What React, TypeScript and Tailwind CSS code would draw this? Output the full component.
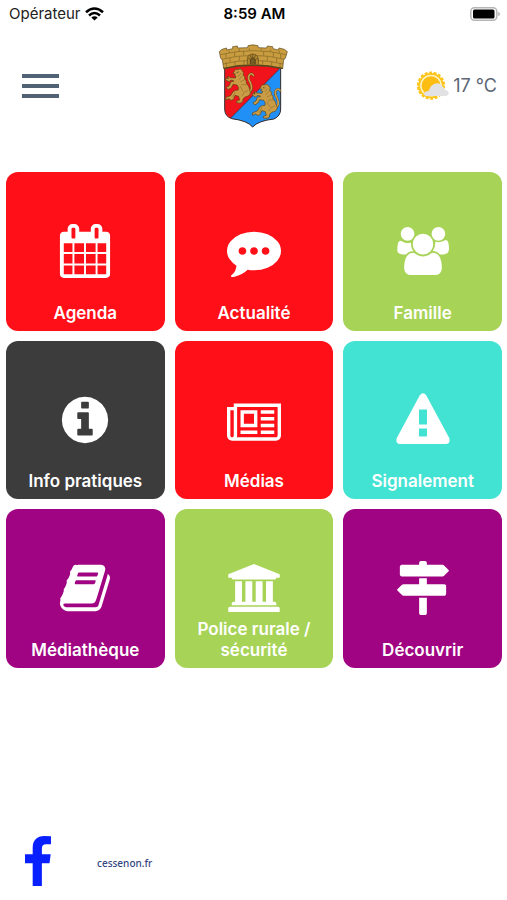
import React from "react";

interface IconProps {
  className?: string;
  viewBox: string;
  d: string;
}

interface Tile {
  label: string;
  color: string;
  viewBox: string;
  icon: string;
}

const RED = "bg-[#ff0f17]";
const GREEN = "bg-[#a7d356]";
const DARK = "bg-[#3c3c3c]";
const TURQUOISE = "bg-[#42e3d2]";
const PURPLE = "bg-[#a00482]";

const tiles: Tile[] = [
  {
    label: "Agenda",
    color: RED,
    viewBox: "0 0 1792 1792",
    icon: "M192 1664h288v-288h-288v288zm352 0h320v-288h-320v288zm-352-352h288v-320h-288v320zm352 0h320v-320h-320v320zm-352-384h288v-288h-288v288zm736 736h320v-288h-320v288zm-384-736h320v-288h-320v288zm768 736h288v-288h-288v288zm-384-352h320v-320h-320v320zm-352-864v-288q0-13-9.5-22.5t-22.5-9.5h-64q-13 0-22.5 9.5t-9.5 22.5v288q0 13 9.5 22.5t22.5 9.5h64q13 0 22.5-9.5t9.5-22.5zm736 864h288v-320h-288v320zm-384-384h320v-288h-320v288zm384 0h288v-288h-288v288zm32-480v-288q0-13-9.5-22.5t-22.5-9.5h-64q-13 0-22.5 9.5t-9.5 22.5v288q0 13 9.5 22.5t22.5 9.5h64q13 0 22.5-9.5t9.5-22.5zm384-64v1280q0 52-38 90t-90 38h-1408q-52 0-90-38t-38-90v-1280q0-52 38-90t90-38h128v-96q0-66 47-113t113-47h64q66 0 113 47t47 113v96h384v-96q0-66 47-113t113-47h64q66 0 113 47t47 113v96h128q52 0 90 38t38 90z",
  },
  {
    label: "Actualité",
    color: RED,
    viewBox: "0 0 1792 1792",
    icon: "M640 896q0-53-37.5-90.5t-90.5-37.5-90.5 37.5-37.5 90.5 37.5 90.5 90.5 37.5 90.5-37.5 37.5-90.5zm384 0q0-53-37.5-90.5t-90.5-37.5-90.5 37.5-37.5 90.5 37.5 90.5 90.5 37.5 90.5-37.5 37.5-90.5zm384 0q0-53-37.5-90.5t-90.5-37.5-90.5 37.5-37.5 90.5 37.5 90.5 90.5 37.5 90.5-37.5 37.5-90.5zm384 0q0 174-120 321.5t-326 233-450 85.5q-110 0-211-18-173 173-435 229-52 10-86 13-12 1-22-6t-13-18q-4-15 20-37 5-5 23.5-21.5t25.5-23.5 23.5-25.5 24-31.5 20.5-37 20-48 14.5-57.5 12.5-72.5q-146-90-229.5-216.5t-83.5-269.5q0-174 120-321.5t326-233 450-85.5 450 85.5 326 233 120 321.5z",
  },
  {
    label: "Famille",
    color: GREEN,
    viewBox: "-48 -112 2016 2016",
    icon: "M593 896q-162 5-265 128h-134q-82 0-138-40.5t-56-118.5q0-353 124-353 6 0 43.5 21t97.5 42.5 119 21.5q67 0 133-23-5 37-5 66 0 159 93 287zm1071 637q0 120-73 189.5t-194 69.5h-874q-121 0-194-69.5t-73-189.5q0-53 3.5-103.5t14-109 26.5-108.5 43-97.5 62-81 85.5-53.5 111.5-20q10 0 43 21.5t73 48 107 48 135 21.5 135-21.5 107-48 73-48 43-21.5q61 0 111.5 20t85.5 53.5 62 81 43 97.5 26.5 108.5 14 109 3.5 103.5zm-1024-1277q0 106-75 181t-181 75-181-75-75-181 75-181 181-75 181 75 75 181zm704 384q0 159-112.5 271.5t-271.5 112.5-271.5-112.5-112.5-271.5 112.5-271.5 271.5-112.5 271.5 112.5 112.5 271.5zm576 225q0 78-56 118.5t-138 40.5h-134q-103-123-265-128 93-128 93-287 0-29-5-66 66 23 133 23 59 0 119-21.5t97.5-42.5 43.5-21q124 0 124 353zm-128-609q0 106-75 181t-181 75-181-75-75-181 75-181 181-75 181 75 75 181z",
  },
  {
    label: "Info pratiques",
    color: DARK,
    viewBox: "0 0 1792 1792",
    icon: "M1152 1376v-160q0-14-9-23t-23-9h-96v-512q0-14-9-23t-23-9h-320q-14 0-23 9t-9 23v160q0 14 9 23t23 9h96v320h-96q-14 0-23 9t-9 23v160q0 14 9 23t23 9h448q14 0 23-9t9-23zm-128-896v-160q0-14-9-23t-23-9h-192q-14 0-23 9t-9 23v160q0 14 9 23t23 9h192q14 0 23-9t9-23zm640 416q0 209-103 385.5t-279.5 279.5-385.5 103-385.5-103-279.5-279.5-103-385.5 103-385.5 279.5-279.5 385.5-103 385.5 103 279.5 279.5 103 385.5z",
  },
  {
    label: "Médias",
    color: RED,
    viewBox: "0 -272 2048 2048",
    icon: "M1024 512h-384v384h384v-384zm128 640v128h-640v-128h640zm0-768v640h-640v-640h640zm640 768v128h-512v-128h512zm0-256v128h-512v-128h512zm0-256v128h-512v-128h512zm0-256v128h-512v-128h512zm-1536 960v-960h-128v960q0 26 19 45t45 19 45-19 19-45zm1664 0v-1088h-1536v1088q0 33-11 64h1483q26 0 45-19t19-45zm128-1216v1216q0 80-56 136t-136 56h-1664q-80 0-136-56t-56-136v-1088h256v-128h1792z",
  },
  {
    label: "Signalement",
    color: TURQUOISE,
    viewBox: "0 0 54 54",
    icon: "M23.8 2.2Q27-1.8 30.2 2.2L53.2 45Q54.8 50.5 50 51H4Q-.8 50.5.8 45ZM23 16.5V31.5H31V16.5ZM23 35.5V43.5H31V35.5Z",
  },
  {
    label: "Médiathèque",
    color: PURPLE,
    viewBox: "0 0 1792 1792",
    icon: "M1703 478q40 57 18 129l-275 906q-19 64-76.5 107.5t-122.5 43.5h-923q-77 0-148.5-53.5t-99.5-131.5q-24-67-2-127 0-4 3-27t4-37q1-8-3-21.5t-3-19.5q2-11 8-21t16.5-23.5 16.5-23.5q23-38 45-91.5t30-91.5q3-10 .5-30t-.5-28q3-11 17-28t17-23q21-36 42-92t25-90q1-9-2.5-32t.5-28q4-13 22-30.5t22-22.5q19-26 42.5-84.5t27.5-96.5q1-8-3-25.5t-2-26.5q2-8 9-18t18-23 17-21q8-12 16.5-30.5t15-35 16-36 19.5-32 26.5-23.5 36-11.5 47.5 5.5l-1 3q38-9 51-9h761q74 0 114 56t18 130l-274 906q-36 119-71.5 153.5t-128.5 34.5h-869q-27 0-38 15-11 16-1 43 24 70 144 70h923q29 0 56-15.5t35-41.5l300-987q7-22 5-57 38 15 59 43zm-1064 2q-4 13 2 22.5t20 9.5h608q13 0 25.5-9.5t16.5-22.5l21-64q4-13-2-22.5t-20-9.5h-608q-13 0-25.5 9.5t-16.5 22.5zm-83 256q-4 13 2 22.5t20 9.5h608q13 0 25.5-9.5t16.5-22.5l21-64q4-13-2-22.5t-20-9.5h-608q-13 0-25.5 9.5t-16.5 22.5z",
  },
  {
    label: "Police rurale / sécurité",
    color: GREEN,
    viewBox: "-48 -112 2016 2016",
    icon: "M960 0l960 384v128h-128q0 26-20.5 45t-48.5 19h-1526q-28 0-48.5-19t-20.5-45h-128v-128zm-704 640h256v768h128v-768h256v768h128v-768h256v768h128v-768h256v768h59q28 0 48.5 19t20.5 45v64h-1664v-64q0-26 20.5-45t48.5-19h59v-768zm1595 960q28 0 48.5 19t20.5 45v128h-1920v-128q0-26 20.5-45t48.5-19h1782z",
  },
  {
    label: "Découvrir",
    color: PURPLE,
    viewBox: "0 0 1792 1792",
    icon: "M1745 297q10 10 10 23t-10 23l-141 141q-28 28-68 28h-1344q-26 0-45-19t-19-45v-256q0-26 19-45t45-19h576v-64q0-26 19-45t45-19h128q26 0 45 19t19 45v64h512q40 0 68 28zm-977 919h256v512q0 26-19 45t-45 19h-128q-26 0-45-19t-19-45v-512zm832-448q26 0 45 19t19 45v256q0 26-19 45t-45 19h-1344q-40 0-68-28l-141-141q-10-10-10-23t10-23l141-141q28-28 68-28h512v-192h256v192h576z",
  },
];

const FACEBOOK =
  "M1343 12v264h-157q-86 0-116 36t-30 108v189h293l-39 296h-254v759h-306v-759h-255v-296h255v-218q0-186 104-288.5t277-102.5q147 0 228 12z";

const Icon: React.FC<IconProps> = ({ className, viewBox, d }) => (
  <svg className={className} viewBox={viewBox} fill="currentColor" aria-hidden="true">
    <path d={d} />
  </svg>
);

const WifiIcon = () => (
  <svg className="h-[14px] w-[19px]" viewBox="0 0 19 14" aria-hidden="true">
    <g fill="none" stroke="#000" strokeWidth="2.6">
      <path d="M1 5.2Q9.5-2.2 18 5.2" />
      <path d="M4 8.4Q9.5 3.6 15 8.4" />
    </g>
    <path d="M9.5 13.6L6.3 10.6Q9.5 8 12.7 10.6Z" />
  </svg>
);

const BatteryIcon = () => (
  <svg className="h-[14px] w-[30px]" viewBox="0 0 30 14" aria-hidden="true">
    <rect x="0.8" y="0.8" width="26" height="12.4" rx="3.6" fill="#fff" stroke="#b5b5b5" strokeWidth="1.5" />
    <rect x="3" y="2.6" width="21.5" height="8.8" rx="1.5" />
    <path d="M28.2 4.8Q30 5.6 30 7T28.2 9.2Z" fill="#b5b5b5" />
  </svg>
);

const Lion = () => (
  <g strokeLinejoin="round" strokeLinecap="round">
    <path d="M146 280Q166 270 155 247Q146 232 152 224Q158 216 164 225" fill="none" stroke="#5b4519" strokeWidth="7" />
    <path d="M146 280Q166 270 155 247Q146 232 152 224Q158 216 164 225" fill="none" stroke="#c99c45" strokeWidth="5" />
    <path
      d="M107 213Q108 205 116 208Q126 202 131 211Q137 217 133 224Q141 229 138 236Q145 241 143 249Q152 258 153 268Q160 279 149 287Q138 288 133 296L132 304Q126 311 114 307L114 302L123 299L120 288L109 285L105 296Q98 304 91 295L81 299L82 291L96 286L103 274Q111 268 119 269Q122 261 115 254L103 252L98 262L88 268L83 261L92 256L96 245L106 242L97 239L91 244L81 239L83 232L89 236L87 227L95 232L110 233L112 227L106 226L110 221L103 219Z"
      fill="#c99c45"
      stroke="#5b4519"
      strokeWidth="2"
    />
    <path
      d="M120 213l-2 5M126 219l-6 9M131 227l-9 10M136 239l-10 5M142 253l-13 0M126 258q2 9 7 15M147 271q-12 2-16 14M109 276l-7 14"
      fill="none"
      stroke="#83642a"
      strokeWidth="1.5"
    />
    <circle cx="115" cy="216" r="1.5" fill="#302510" />
  </g>
);

const Crest = () => (
  <svg className="h-[84px] w-[70px]" viewBox="58 131 210 252" role="img" aria-label="Blason">
    <path d="M78 195H246V326Q246 347 226 356Q179 361 162 380Q147 361 99 355Q78 348 78 326Z" fill="#f0131c" />
    <path d="M246 202V326Q246 347 226 356Q179 361 162 380Q147 361 99 355L96 353Z" fill="#2090f6" />
    <path d="M246 202L96 353" stroke="#302b35" strokeWidth="2" />
    <path
      d="M78 195H246V326Q246 347 226 356Q179 361 162 380Q147 361 99 355Q78 348 78 326Z"
      fill="none"
      stroke="#333"
      strokeWidth="3"
    />
    <Lion />
    <g transform="translate(80 46)">
      <Lion />
    </g>
    <path
      d="M62 154L70 147L84 143L84 149L102 145L102 139L116 137L117 143L147 142L148 136Q162 131 178 136L179 142L204 143L206 137L222 139L223 145L239 149L241 143L257 147L266 154L260 174L255 177L252 205Q163 187 75 205L71 178L66 174Z"
      fill="#c99d3f"
      stroke="#594519"
      strokeWidth="2"
      strokeLinejoin="round"
    />
    <g fill="none" stroke="#846627" strokeWidth="2">
      <path d="M65 163Q163 139 263 163M69 177Q163 153 258 177M73 191Q163 169 254 191" />
      <path d="M92 151v7M122 146v7M152 144v6M188 144v7M216 147v7M242 151v7M82 160v13M108 155v14M135 152v13M195 153v13M224 156v14M246 161v12M94 172v13M122 168v13M206 168v13M234 173v13M83 186v13M109 183v13M136 180v13M192 180v13M219 183v13M244 188v13" />
    </g>
    <path d="M146 192V175Q147 162 162 161Q177 162 179 175V192" fill="#b1872f" stroke="#594519" strokeWidth="2" />
    <path d="M155 191V179Q157 172 162 172T170 179V191" fill="#765b22" stroke="#413315" strokeWidth="2" />
    <path d="M148 173l8 5M154 164l4 9M162 161v10M171 164l-4 9M178 174l-8 4" stroke="#594519" strokeWidth="2" />
    <path d="M75 204Q163 184 252 204" fill="none" stroke="#59451c" strokeWidth="4" />
  </svg>
);

const WeatherIcon = () => (
  <svg className="h-[30px] w-[33px]" viewBox="50 210 99 90" role="img" aria-label="Partiellement nuageux">
    <circle cx="95" cy="254" r="39" fill="none" stroke="#fec51c" strokeWidth="7" strokeDasharray="9 4.61" />
    <circle cx="95" cy="254" r="35" fill="none" stroke="#fec51c" strokeWidth="6" />
    <circle cx="95" cy="254" r="32" fill="#fff0bd" />
    <circle cx="95" cy="254" r="28" fill="#fdbd13" />
    <path
      d="M79 285Q70 281 77 274Q81 269 89 269Q91 257 103 250Q119 241 131 258Q136 260 136 266Q148 268 148 277Q147 285 137 285Z"
      fill="#e2e2e4"
    />
  </svg>
);

const App: React.FC = () => {
  return (
    <div className="flex min-h-screen flex-col bg-white font-[Inter,'Liberation_Sans',sans-serif]">
      <div className="grid h-7 grid-cols-3 items-center pr-[7px] pl-[9px] text-[15px] text-[#222]">
        <div className="flex items-center gap-1">
          <span>Opérateur</span>
          <WifiIcon />
        </div>
        <span className="text-center font-semibold text-black">8:59 AM</span>
        <div className="flex justify-end">
          <BatteryIcon />
        </div>
      </div>

      <header className="grid h-36 grid-cols-3 items-start px-[10px] pt-4">
        <button
          type="button"
          aria-label="Menu"
          className="ml-3 flex h-[84px] w-[37px] cursor-pointer flex-col justify-center gap-[6px]"
        >
          <span className="h-1 w-full bg-[#526275]"></span>
          <span className="h-1 w-full bg-[#526275]"></span>
          <span className="h-1 w-full bg-[#526275]"></span>
        </button>
        <div className="flex justify-center">
          <Crest />
        </div>
        <div className="flex h-[84px] items-center justify-end gap-1 text-lg text-[#5c6675]">
          <WeatherIcon />
          <span className="whitespace-nowrap">17 °C</span>
        </div>
      </header>

      <main className="grid grid-cols-3 gap-[10px] pr-[5px] pl-[6px]">
        {tiles.map((tile) => (
          <button
            key={tile.label}
            type="button"
            className={`flex aspect-square cursor-pointer flex-col items-center justify-between rounded-xl px-3 pt-[52px] pb-[7px] text-white ${tile.color}`}
          >
            <Icon className="-mb-2 size-[54px] shrink-0" viewBox={tile.viewBox} d={tile.icon} />
            <span className="text-[17px] leading-[21px] font-semibold">{tile.label}</span>
          </button>
        ))}
      </main>

      <footer className="mt-auto flex items-center gap-[46px] pb-[14px] pl-[25px]">
        <a href="#facebook" aria-label="Facebook" className="text-[#0820ff]">
          <Icon className="h-[50px] w-[26px]" viewBox="479 0 864 1664" d={FACEBOOK} />
        </a>
        <a href="#cessenon" className="mt-1 font-['Noto_Sans',sans-serif] text-[10px] font-medium text-[#34467f]">
          cessenon.fr
        </a>
      </footer>
    </div>
  );
};

export default App;
